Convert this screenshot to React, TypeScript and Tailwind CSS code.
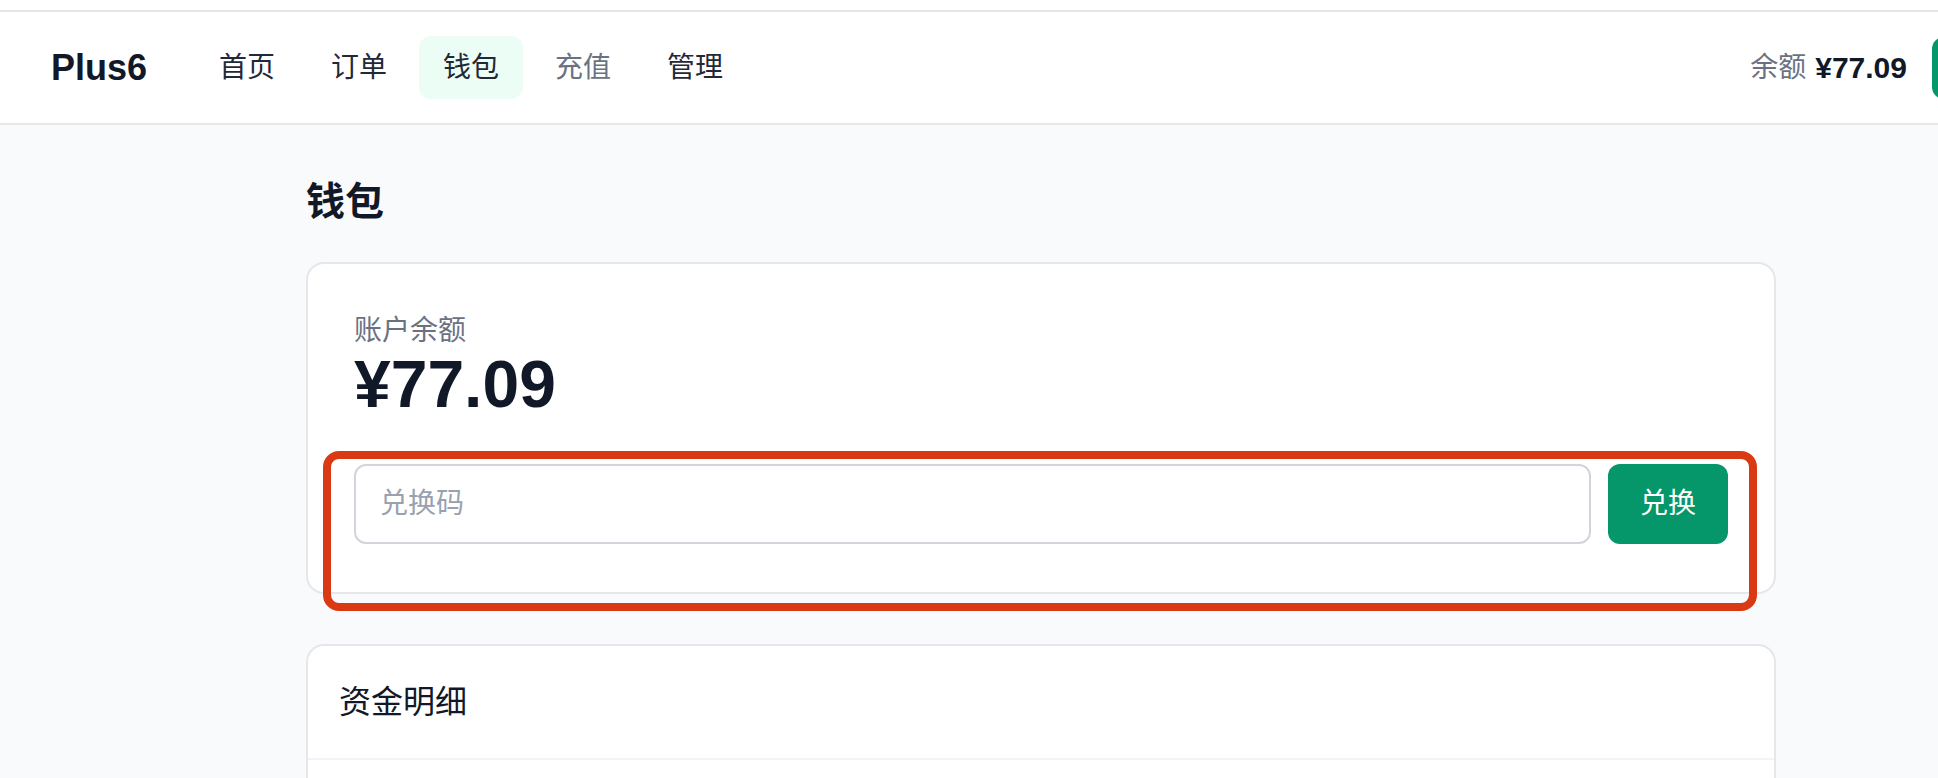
import { useState } from 'react';

const navItems = [
  { label: '首页', active: false, muted: false },
  { label: '订单', active: false, muted: false },
  { label: '钱包', active: true, muted: false },
  { label: '充值', active: false, muted: true },
  { label: '管理', active: false, muted: false },
];

export default function App() {
  const [code, setCode] = useState('');

  return (
    <div className="w-[1938px] h-[778px] overflow-hidden bg-gray-50 text-gray-900 font-['Liberation_Sans','Noto_Sans_CJK_SC',sans-serif]">
      <div className="w-[2082px]">
        <div className="h-[10px] bg-white" />

        {/* Header */}
        <header className="flex items-center justify-between bg-white border-t-2 border-t-[#e5e5e5] border-b-2 border-b-[#e5e7eb] pl-[51px] pr-[50px] py-[24px]">
          <div className="flex items-center">
            <span className="text-[36px] font-bold leading-[39px] text-[#111827]">Plus6</span>
            <nav className="ml-[48px] flex items-center gap-[8px]">
              {navItems.map((item) => (
                <a
                  key={item.label}
                  className={`px-[24px] py-[12px] rounded-[12px] text-[28px] leading-[39px] ${
                    item.active
                      ? 'bg-[#ecfdf5] text-[#1f2937]'
                      : item.muted
                      ? 'text-gray-500'
                      : 'text-[#1f2937]'
                  }`}
                >
                  {item.label}
                </a>
              ))}
            </nav>
          </div>
          <div className="flex items-center gap-[25px]">
            <div className="flex items-center text-[28px] leading-[39px]">
              <span className="text-gray-500">余额</span>
              <span className="ml-[9px] text-[30px] font-bold text-[#111827]">¥77.09</span>
            </div>
            {/* account button, runs off the right edge */}
            <button aria-label="账户" className="w-[100px] h-[62px] rounded-[12px] bg-[#059669]" />
          </div>
        </header>

        <main className="mx-auto w-[1470px] pt-[52px]">
          <h1 className="text-[39px] font-bold leading-[50px] mb-[35px] text-[#111827]">钱包</h1>

          {/* Balance card */}
          <div className="relative bg-white border-2 border-[#e5e7eb] rounded-[18px] px-[46px] pt-[46px] pb-[48px]">
            <p className="text-[28px] leading-[41px] text-gray-500">账户余额</p>
            <p className="text-[66px] font-bold leading-none text-[#111827]">¥77.09</p>
            <div className="mt-[47px] flex items-center gap-[17px]">
              <input
                value={code}
                onChange={(e) => setCode(e.target.value)}
                placeholder="兑换码"
                className="flex-1 h-[80px] border-2 border-[#d1d5db] rounded-[12px] px-[24px] text-[28px] outline-none placeholder:text-gray-400"
              />
              <button className="w-[120px] h-[80px] rounded-[12px] bg-[#059669] text-white text-[28px]">
                兑换
              </button>
            </div>

            {/* annotation frame */}
            <div className="pointer-events-none absolute left-[15px] top-[187px] right-[17px] -bottom-[19px] border-[8px] border-[#da3a13] rounded-[16px]" />
          </div>

          {/* Transactions */}
          <div className="mt-[50px] bg-white border-2 border-[#e5e7eb] rounded-[18px]">
            <div className="px-[31px] py-[35px] border-b-2 border-[#f3f4f6]">
              <h2 className="text-[32px] leading-[42px] text-[#111827]">资金明细</h2>
            </div>
            <div className="h-[300px]" />
          </div>
        </main>
      </div>
    </div>
  );
}
